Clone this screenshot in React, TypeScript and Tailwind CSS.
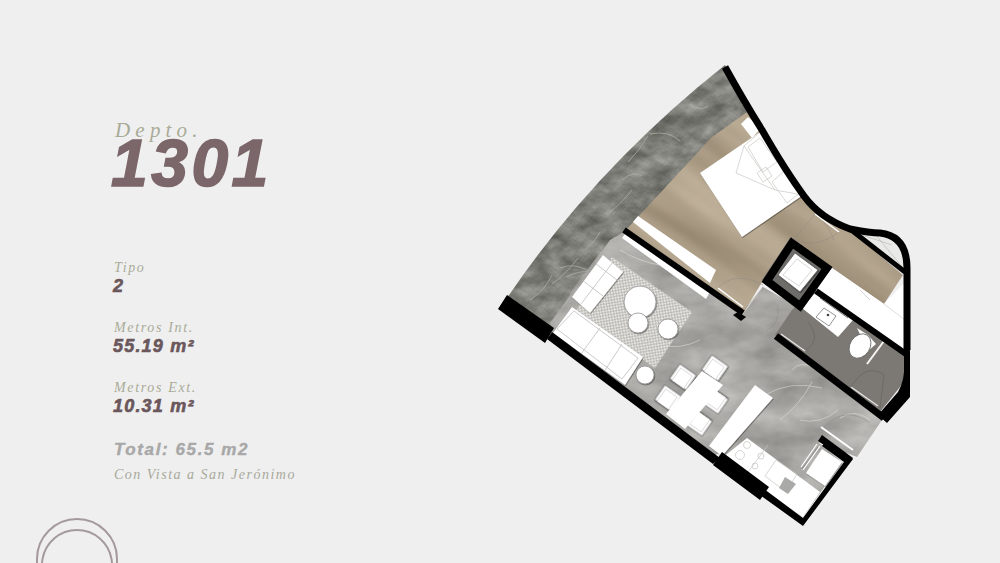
const serif = "font-['Liberation_Serif',serif] italic text-[#a9ab98]";
const bold = "font-['Liberation_Sans',sans-serif] font-bold italic";

function Spec({ label, value }: { label: string; value: React.ReactNode }) {
  return (
    <div className="h-[60px]">
      <div className={`${serif} pl-[1px] text-[14px] leading-[18px] tracking-[1.65px]`}>{label}</div>
      <div className={`${bold} text-[18px] leading-[18px] tracking-[1.2px] text-[#6a565b] [-webkit-text-stroke:0.6px_#6a565b]`}>{value}</div>
    </div>
  );
}

const Wall = ({ d, w = 6 }: { d: string; w?: number }) => (
  <path d={d} fill="none" stroke="#000" strokeWidth={w} strokeLinejoin="miter" />
);

const Chair = ({ x, y, a = 35 }: { x: number; y: number; a?: number }) => (
  <g transform={`translate(${x} ${y}) rotate(${a})`}>
    <rect x="-10" y="-9" width="20" height="18" fill="#fff" stroke="#666" strokeWidth="0.7" filter="url(#shadow)" />
    <rect x="-7" y="-6" width="14" height="15" fill="#fff" stroke="#bbb" strokeWidth="0.5" />
  </g>
);

const Circle = ({ x, y, r }: { x: number; y: number; r: number }) => (
  <circle cx={x} cy={y} r={r} fill="#fff" stroke="#8a8a8a" strokeWidth="0.7" filter="url(#shadow)" />
);

function FloorPlan() {
  const band = "M507 298 Q 595 168 725 65 L 750 112 Q 640 200 553 328 Z";
  const main = "M610 240 L550 323 L552 335 L713 456 L722 452 L803 517 L842 462 L818 442 L857 457 L882 420 L777 335 L800 308 L763 287 L743 314 L624 232 Z";
  const wood = "M712 137 L750 110 Q 775 150 803 198 Q 815 212 827 217 L853 233 L903 275 L884 304 L832 268 L792 238 L762 282 L743 314 L624 232 Z";
  const bath = "M792 310 L775 335 L880 412 L904 382 L905 352 L815 288 Z";
  return (
    <svg viewBox="490 60 430 470" className="mt-[60px] h-[470px] w-[430px] shrink-0">
      <defs>
        <filter id="stone" x="0" y="0" width="100%" height="100%" colorInterpolationFilters="sRGB">
          <feTurbulence type="fractalNoise" baseFrequency="0.02 0.04" numOctaves="4" seed="4" />
          <feColorMatrix type="matrix" values="0.28 0 0 0 0.52  0.28 0 0 0 0.515  0.28 0 0 0 0.5  0 0 0 0 1" />
          <feComposite operator="in" in2="SourceAlpha" />
        </filter>
        <filter id="darkstone" x="0" y="0" width="100%" height="100%" colorInterpolationFilters="sRGB">
          <feTurbulence type="fractalNoise" baseFrequency="0.04 0.07" numOctaves="4" seed="9" />
          <feColorMatrix type="matrix" values="0.42 0 0 0 0.29  0.42 0 0 0 0.29  0.42 0 0 0 0.27  0 0 0 0 1" />
          <feComposite operator="in" in2="SourceAlpha" />
        </filter>
        <filter id="woodf" x="0" y="0" width="100%" height="100%" colorInterpolationFilters="sRGB">
          <feTurbulence type="fractalNoise" baseFrequency="0.005 0.035" numOctaves="2" seed="7" />
          <feColorMatrix type="matrix" values="0.3 0 0 0 0.54  0.3 0 0 0 0.48  0.3 0 0 0 0.39  0 0 0 0 1" />
        </filter>
        <filter id="shadow" x="-20%" y="-20%" width="150%" height="150%">
          <feDropShadow dx="0.6" dy="0.8" stdDeviation="0.6" floodColor="#000" floodOpacity="0.55" />
        </filter>
        <pattern id="rug" width="4" height="4" patternUnits="userSpaceOnUse" patternTransform="rotate(35)">
          <rect width="4" height="4" fill="#bdbbb6" />
          <circle cx="1" cy="1" r="1.05" fill="#ecebe8" />
          <circle cx="3" cy="3" r="1.05" fill="#e4e3e0" />
        </pattern>
        <pattern id="tile" width="7" height="7" patternUnits="userSpaceOnUse" patternTransform="rotate(35)">
          <path d="M0 0H7M0 0V7" stroke="#2f2f2c" strokeWidth="0.5" opacity="0.28" />
        </pattern>
        <clipPath id="woodclip"><path d={wood} /></clipPath>
      </defs>

      {/* stone terrace band */}
      <path d={band} fill="#777" filter="url(#darkstone)" />
      <path d={band} fill="url(#tile)" />
      <g fill="none" stroke="#b6b4ad" strokeWidth="0.9" opacity="0.75">
        <path d="M650 134 Q 668 130 680 141 M648 136 Q 640 150 628 162 M622 180 Q 634 170 642 176" />
        <path d="M560 268 Q 575 262 590 272 Q 580 270 566 277 M552 284 Q 565 275 578 258 M585 250 Q 596 240 600 232" />
        <path d="M690 104 Q 700 112 708 106 M610 212 Q 620 205 632 190 M530 300 Q 545 290 552 275" />
      </g>

      {/* floors */}
      <path d={main} fill="#999" filter="url(#stone)" />
      <g fill="none" stroke="#e0dfdb" strokeWidth="0.8" opacity="0.7">
        <path d="M765 395 Q 790 380 822 388 M780 420 Q 800 405 812 382 M792 370 Q 800 360 815 368 M800 420 Q 820 425 838 410" />
        <path d="M660 345 Q 680 350 700 340 M620 250 Q 640 262 660 265" />
        <path d="M840 418 Q 855 408 870 420" />
      </g>
      <g clipPath="url(#woodclip)">
        <rect x="570" y="60" width="400" height="320" transform="rotate(35 770 220)" filter="url(#woodf)" />
      </g>
      <path d={bath} fill="#7c7975" />
      <path d="M790 238 L832 268 L800 308 L762 280 Z" fill="#6f6d6a" />

      {/* white closets and strips */}
      <path d="M832 268 L815 290 L905 352 L905 282 L884 304 Z" fill="#fff" />
      <path d="M857 232 L903 270 Q 903 250 897 243 Q 890 234 875 234 Z" fill="#e9e9e7" />
      <path d="M862 235 L892 245 M875 234 L903 268 M860 290 L870 300" stroke="#a8a8a4" strokeWidth="0.5" fill="none" />
      <path d="M884 304 L905 320" stroke="#bbb" strokeWidth="0.5" />
      <path d="M633 222 L638 216 L716 270 L710 283 Z" fill="#fff" />
      <path d="M622 238 L627 231 L711 290 L706 299 Z" fill="#fff" />
      <path d="M648 250 L702 288" stroke="#ccc" strokeWidth="0.5" />
      <path d="M741 124 L748 117 L761 128 L752 138 Z" fill="#fff" />

      {/* bed */}
      <path d="M700 173 L760 132 L803 195 L742 237 Z" fill="#fff" filter="url(#shadow)" />
      <g fill="none" stroke="#c9c7c3" strokeWidth="0.7">
        <path d="M736 173 L744 146 L760 132 M744 146 L775 190 L803 195 M736 173 L775 190" />
        <path d="M748 147 L760 138 L777 162 L763 172 Z M772 182 L785 170 L801 192 L787 203 Z" />
        <path d="M757 173 L766 167 L772 176 L763 182 Z" />
      </g>

      {/* rug and living furniture */}
      <path d="M612 257 L692 312 L655 368 L575 312 Z" fill="url(#rug)" />
      <g filter="url(#shadow)">
        <path d="M603 255 L623 272 L590 313 L572 297 Z" fill="#fff" />
        <path d="M553 333 L572 307 L643 357 L625 385 Z" fill="#fff" />
      </g>
      <g fill="none" stroke="#b5b5b5" strokeWidth="0.7">
        <path d="M596 264 L617 280 M582 280 L603 296 M613 262 L581 304 M601 252 L570 294" />
        <path d="M557 329 L574 311 L638 358 L622 379 Z M600 328 L578 358 M622 344 L602 375" />
      </g>
      <Circle x={640} y={302} r={16} />
      <Circle x={638} y={323} r={10} />
      <Circle x={668} y={329} r={10} />
      <Circle x={645} y={375} r={9} />

      {/* dining */}
      <Chair x={683} y={377} />
      <Chair x={715} y={368} />
      <Chair x={668} y={398} />
      <Chair x={715} y={401} a={215} />
      <Chair x={699} y={423} a={215} />
      <path d="M702 371 L723 385 L685 429 L666 414 Z" fill="#fff" />

      {/* kitchen */}
      <path d="M755 385 L773 398 L722 456 L709 446 Z" fill="#fff" filter="url(#shadow)" />
      <path d="M747 438 L820 492 L803 517 L722 458 Z" fill="#fff" />
      <g fill="none" stroke="#c4c4c2" strokeWidth="0.7">
        <circle cx="747" cy="445" r="3.5" />
        <circle cx="740" cy="455" r="4.5" />
        <circle cx="761" cy="456" r="3" />
        <circle cx="755" cy="466" r="3" />
        <path d="M776 460 L797 474 L786 492 L765 476 Z M768 445 L740 483" />
      </g>
      <path d="M785 477 L796 484 L788 494 L779 488 Z" fill="#a9a9a7" />

      {/* fridge */}
      <path d="M822 449 L842 462 L825 486 L806 473 Z" fill="#fff" filter="url(#shadow)" />
      <path d="M820 446 L803 470 M817 444 L801 467" stroke="#fff" strokeWidth="1.2" />
      <path d="M818 447 L802 469" stroke="#777" strokeWidth="0.6" />

      {/* closet box */}
      <path d="M795 253 L818 270 L800 292 L778 275 Z" fill="#fff" stroke="#555" strokeWidth="0.8" filter="url(#shadow)" />
      <path d="M797 259 L812 270 L799 286 L783 275 Z" fill="none" stroke="#bbb" strokeWidth="0.6" />
      <path d="M767 284 L798 305" stroke="#fff" strokeWidth="2" />

      {/* bathroom */}
      <path d="M815 293 L802 308 L838 337 L853 320 Z" fill="#fff" />
      <path d="M820 298 L848 318" stroke="#555" strokeWidth="0.8" />
      <path d="M824 308 L836 316 L829 326 L816 317 Z" fill="none" stroke="#777" strokeWidth="0.8" />
      <circle cx="828" cy="315" r="1.3" fill="#444" />
      <path d="M857 328 L868 335 L876 344 L868 351 Z" fill="#fff" />
      <ellipse cx="860" cy="346" rx="10" ry="13" transform="rotate(33 860 346)" fill="#fff" stroke="#666" strokeWidth="0.8" />
      <path d="M884 341 L867 364" stroke="#f5f5f3" strokeWidth="2" />
      <path d="M781 334 L805 351 M851 387 L878 406" stroke="#e8e8e6" strokeWidth="1.2" />
      <g fill="none" stroke="#5e5c59" strokeWidth="0.5">
        <path d="M808 322 Q 822 340 806 350 M851 387 Q 866 362 884 375 M884 375 L880 408" />
      </g>

      {/* door swings */}
      <g fill="none" stroke="#8f8a82" strokeWidth="0.5">
        <path d="M816 213 L794 239 Q 815 250 839 232 M816 213 Q 830 228 834 240" />
        <path d="M718 288 Q 735 270 763 285 M743 312 L763 287" />
        <path d="M778 305 Q 780 325 767 330" />
        <path d="M824 427 Q 845 405 870 423" />
      </g>
      <path d="M815 214 L839 232" stroke="#fff" strokeWidth="1.5" />
      <path d="M718 288 L743 307" stroke="#fff" strokeWidth="1.5" />
      <path d="M821 427 L853 450" stroke="#fff" strokeWidth="1.8" />

      {/* walls */}
      <Wall d="M725 67 Q 745 103 762 130 Q 785 170 804 196 Q 820 218 850 229 Q 870 233 880 233 Q 907 236 907 268 L907 350" w={7} />
      <Wall d="M850 229 L905 272" w={5} />
      <Wall d="M624 230 L743 313" w={6} />
      <path d="M738 312 L746 317 L741 321 L733 315 Z" fill="#000" />
      <Wall d="M792 243 L827 268 L800 306 L767 281 Z" w={8} />
      <Wall d="M816 291 L906 354" w={6} />
      <Wall d="M776 336 L884 418" w={7} />
      <path d="M904 348 L910 347 L910 397 L887 423 L878 415 L898 392 Q 905 380 904 365 Z" fill="#000" />
      <path d="M547 339 L552 332 L720 458 L713 464 Z" fill="#000" />
      <path d="M507 295 L498 309 L545 343 L554 328 Z" fill="#000" />
      <path d="M722 452 L769 487 L760 500 L713 465 Z" fill="#000" />
      <path d="M764 489 L803 518 L844 462 L822 446 L826 441 L853 459 L803 526 L760 495 Z" fill="#000" />
      <path d="M822 435 L853 458 L850 462 L818 441 Z" fill="#000" />
    </svg>
  );
}

export default function App() {
  return (
    <div className="flex h-[563px] w-[1000px] overflow-hidden bg-[#efefef]">
      <div className="w-[490px] shrink-0 pl-[113px]">
        <div className={`${serif} mt-[118px] pl-[2px] text-[21px] leading-[24px] tracking-[5.2px]`}>Depto.</div>
        <div className={`${bold} -mt-[12px] -ml-[2px] text-[66px] leading-[66px] tracking-[3.5px] text-[#7b6669] [-webkit-text-stroke:1.6px_#7b6669]`}>1301</div>
        <div className="mt-[63px]">
          <Spec label="Tipo" value="2" />
          <Spec label="Metros Int." value={<>55.19 m²</>} />
          <Spec label="Metros Ext." value={<>10.31 m²</>} />
        </div>
        <div className={`${bold} mt-[1px] pl-[1px] text-[17px] leading-[20px] tracking-[1.6px] text-[#a8a8a8] [-webkit-text-stroke:0.4px_#a8a8a8]`}>Total: 65.5 m2</div>
        <div className={`${serif} mt-[6px] pl-[1px] text-[14px] leading-[18px] tracking-[1.5px] !text-[#a8a99c]`}>Con Vista a San Jerónimo</div>
        <svg viewBox="0 0 84 50" className="mt-[29px] -ml-[77px] h-[50px] w-[84px]">
          <path d="M1 50 V46 A 40 40 0 0 1 81 46 V50" fill="none" stroke="#a59a9b" strokeWidth="2" />
          <path d="M6 50 L6.5 46 A 35 35 0 0 1 75.5 46 L76 50" fill="none" stroke="#a59a9b" strokeWidth="2" />
        </svg>
      </div>
      <FloorPlan />
    </div>
  );
}
